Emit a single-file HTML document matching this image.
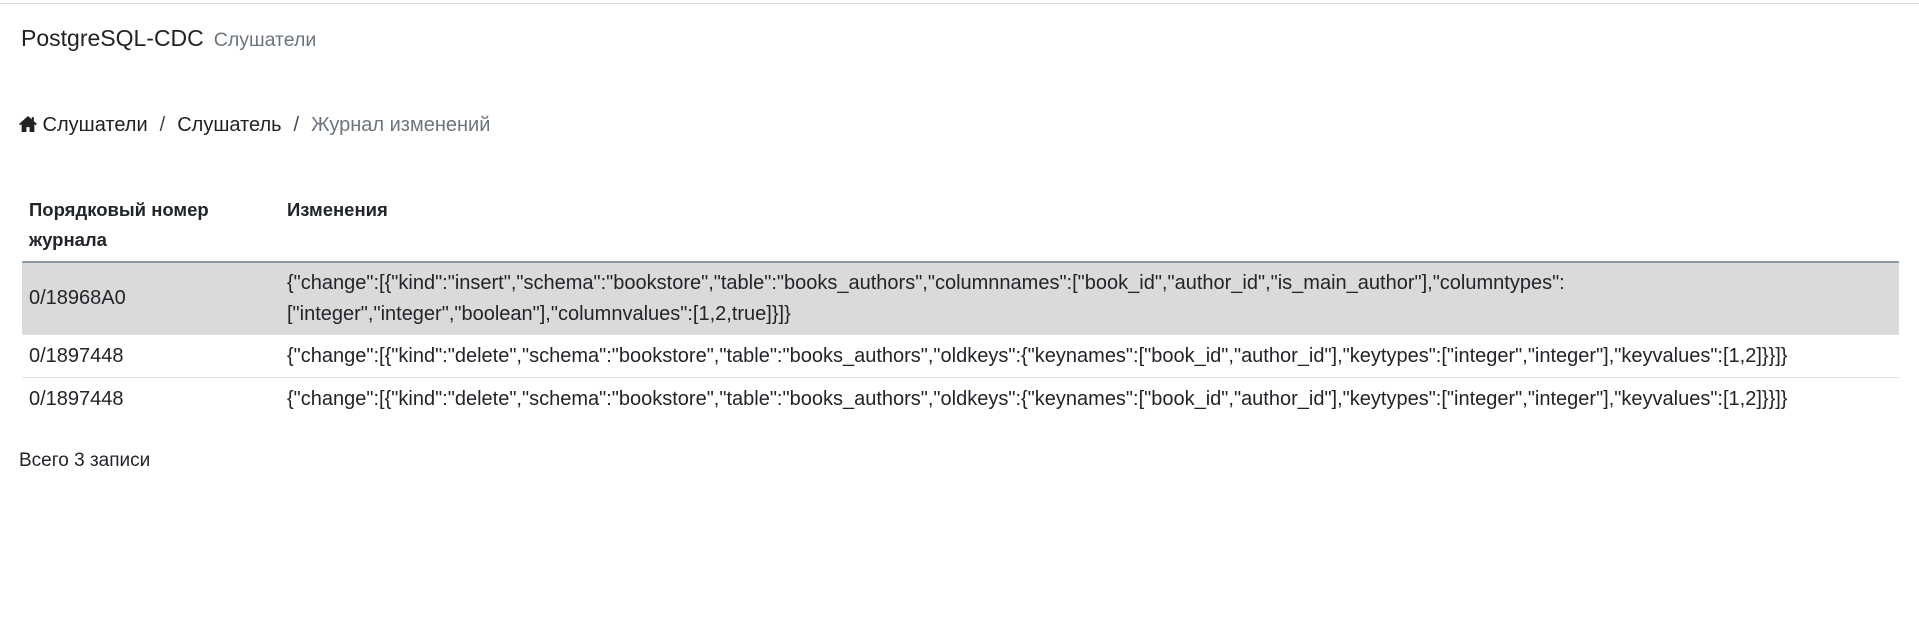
<!DOCTYPE html>
<html><head><meta charset="utf-8"><style>
body{margin:0;width:1919px;height:621px;background:#fff;font-family:"Liberation Sans",sans-serif;color:#212529;position:relative;overflow:hidden}
.top{position:absolute;top:3px;left:0;right:0;height:1px;background:#ddd}
.title{position:absolute;left:21px;top:25px;font-size:23px;color:#222}
.title small{font-size:19.5px;color:#6c757d;margin-left:10px}
.bc{position:absolute;left:19px;top:114px;font-size:20px;color:#222}
.bc .sep{margin:0 12px;color:#444}
.bc .act{color:#6c757d}
table{position:absolute;left:22px;top:189px;width:1877px;border-collapse:collapse;font-size:20px}
th{text-align:left;font-weight:bold;vertical-align:top;padding:6px 7px 6px 7px;line-height:30px;border-bottom:2px solid #8b9aa5;font-size:18.5px}
td{padding:0 7px;white-space:nowrap;border-top:1px solid #dee2e6;line-height:31px}
tr.hl td{background:#dadada;height:71px}
tr.n td{height:42px}
.total{position:absolute;left:19px;top:450px;font-size:19px}
</style></head><body>
<div class="top"></div>
<div class="title">PostgreSQL-CDC<small>Слушатели</small></div>
<div class="bc"><svg width="18" height="16" viewBox="0 0 17 15" style="vertical-align:-1px"><path d="M8.5 0L0 7.5l1.2 1.2L2.5 7.6V15h4.5v-4.5h3V15h4.5V7.6l1.3 1.1L17 7.5 14 4.8V1h-2v2.1z" fill="#222"/></svg> Слушатели<span class="sep">/</span>Слушатель<span class="sep">/</span><span class="act">Журнал изменений</span></div>
<table>
<tr><th style="width:244px">Порядковый номер<br>журнала</th><th>Изменения</th></tr>
<tr class="hl"><td>0/18968A0</td><td>{"change":[{"kind":"insert","schema":"bookstore","table":"books_authors","columnnames":["book_id","author_id","is_main_author"],"columntypes":<br>["integer","integer","boolean"],"columnvalues":[1,2,true]}]}</td></tr>
<tr class="n"><td>0/1897448</td><td>{"change":[{"kind":"delete","schema":"bookstore","table":"books_authors","oldkeys":{"keynames":["book_id","author_id"],"keytypes":["integer","integer"],"keyvalues":[1,2]}}]}</td></tr>
<tr class="n"><td>0/1897448</td><td>{"change":[{"kind":"delete","schema":"bookstore","table":"books_authors","oldkeys":{"keynames":["book_id","author_id"],"keytypes":["integer","integer"],"keyvalues":[1,2]}}]}</td></tr>
</table>
<div class="total">Всего 3 записи</div>
</body></html>
